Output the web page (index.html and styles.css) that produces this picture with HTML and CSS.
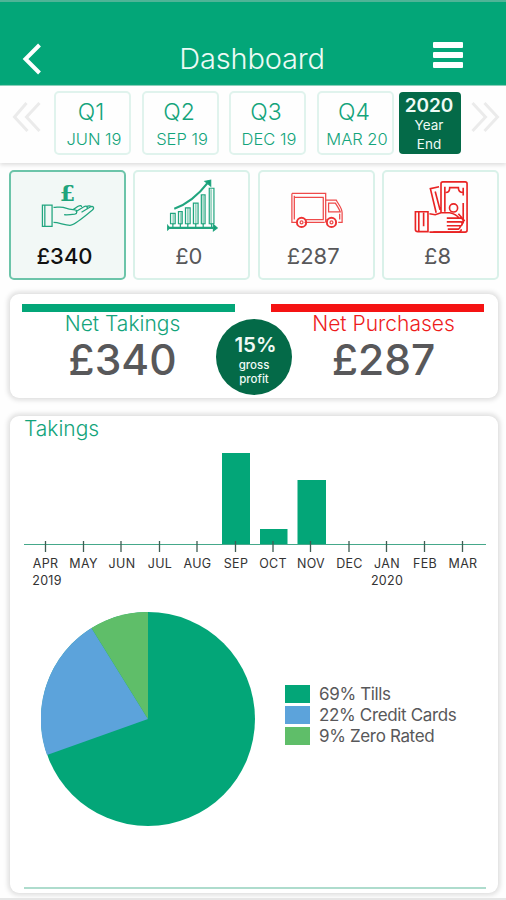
FILE: index.html
```html
<!DOCTYPE html>
<html lang="en">
<head>
  <meta charset="UTF-8">
  <meta name="viewport" content="width=device-width, initial-scale=1.0">
  <title>Dashboard</title>
  <link rel="stylesheet" href="styles.css">
</head>
<body>
  <header class="topbar">
    <svg class="back" width="20" height="34" viewBox="0 0 20 34"><path d="M17.500 3L3.500 17l14 14"/></svg>
    <h1>Dashboard</h1>
    <div class="menu"><span></span><span></span><span></span></div>
  </header>

  <nav class="periods">
    <svg class="arrow" width="30" height="32" viewBox="0 0 30 32"><path d="M15.500 2L3.500 16l13 14M28.500 2L15.500 16l13 14"/></svg>
    <div class="quarter q1"><b>Q1</b><span>JUN 19</span></div>
    <div class="quarter q2"><b>Q2</b><span>SEP 19</span></div>
    <div class="quarter q3"><b>Q3</b><span>DEC 19</span></div>
    <div class="quarter q4"><b>Q4</b><span>MAR 20</span></div>
    <div class="year"><b>2020</b><span>Year<br>End</span></div>
    <svg class="arrow arrow-next" width="30" height="32" viewBox="0 0 30 32"><path d="M2.500 2l13 14-13 14M14.500 2l13 14-13 14"/></svg>
  </nav>

  <section class="tiles">
    <div class="tile active">
      <svg class="icon green" width="58" height="56" viewBox="0 0 60 58">
        <text class="pound" x="29.500" y="24">£</text>
        <path d="M3.500 28h10v22h-10zM6 28v22"/>
        <path d="M15 30.500c4 0 6-1 10 0 4 1.500 8 2.500 12 2.500 3 0 3 4 0 4.500-4 .5-8 1-11 .5M15 46c6 0 11 3 17 3 5 0 17-11 23-15.500 3-2.500 1-5-2-3.500l-9 5.500M38 35l8-5c3-1.500 5-.5 3.500 1.500M35 33l5-3.500c3-1.500 4-1 4 .5M49 30c2-1.500 5-1.500 5 .5"/>
      </svg>
      <span>£340</span>
    </div>
    <div class="tile">
      <svg class="icon green" width="58" height="56" viewBox="0 0 62 60">
        <path d="M11 38V50M19 37V50M26.500 32V50M35 27V50M43 19V50M51.500 12V50" class="bar-shadow"/>
        <path d="M8 38h5v11H8zM16.500 36h4v13h-4zM24 32h5v17h-5zM32.500 27h5v22h-5zM41 18h4v31h-4zM49.500 11h5v38h-5z"/>
        <path class="thick" d="M5 53.500h50M12 33c14-5 26-15 36-28"/>
        <path class="solid" d="M45 3.500l6-1 0 6zM54 50l4 3.500-4 3zM5 51l2 2.500-2 2z"/>
        <path d="M10.500 49v4M18.500 49v4M26.500 49v4M35 49v4M43 49v4M52 49v4"/>
      </svg>
      <span>£0</span>
    </div>
    <div class="tile">
      <svg class="icon red" width="58" height="56" viewBox="0 0 60 58">
        <path d="M4 16h35v30M4 16v30h5M17 46h21M6.500 43V18.500M6.500 20H37M17 43h20M36.500 20v23"/>
        <path d="M39 23h11c2 4 6 8 6 13v10h-4M42 26h7c2 3 4 6 5 9H42zM39 43h1M53.500 37v6"/>
        <circle class="wheel" cx="14" cy="46" r="4.800"/><circle cx="14" cy="46" r="1.500"/>
        <circle class="wheel" cx="45" cy="46" r="4.800"/><circle cx="45" cy="46" r="1.500"/>
      </svg>
      <span>£287</span>
    </div>
    <div class="tile">
      <svg class="icon red" width="58" height="56" viewBox="0 0 60 58">
        <path class="mid" d="M30 36V6q0-2 2-2h23q2 0 2 2v48q0 2-2 2H22M34 9v26M53 18V10M53 47V26M35 15c3 0 4-2 4-5h9c0 3 2 5 5 5M28 9l-9 2 6 25M24 14l5 19"/>
        <circle class="mid" cx="43" cy="31" r="4.200"/>
        <path class="mid" d="M3.500 35h13v20.500H6q-2.500 0-2.500-2zM7 35v20M12 36v14M18 37l6 1 6-2h9c5 1 8 3 10 6M18 56h29c3 0 4-1 4-3M36 41.500h14q2 0 3 2M36 45.500h15q2 2 0 4H36M37 53h11q2-1 2-3M48 37l6 7-3 3"/>
      </svg>
      <span>£8</span>
    </div>
  </section>

  <section class="card summary">
    <div class="total takings">
      <h2>Net Takings</h2>
      <p>£340</p>
    </div>
    <div class="total purchases">
      <h2>Net Purchases</h2>
      <p>£287</p>
    </div>
    <div class="profit"><b>15%</b><span>gross<br>profit</span></div>
  </section>

  <section class="card report">
    <h2>Takings</h2>
    <svg class="chart" width="462" height="146" viewBox="24 444 462 146">
      <path class="bar" d="M222 453h28v91h-28zM260 529h27.500v15H260zM297.500 480H326v64h-28.500z"/>
      <path class="axis" d="M24 544.500h462"/>
      <path class="ticks" d="M45.500 541v11M83.500 541v11M121 541v11M159.500 541v11M197 541v11M235.500 541v11M273 541v11M310.500 541v11M349 541v11M386.500 541v11M424.500 541v11M462.500 541v11"/>
      <g class="labels">
        <text x="45.500" y="568">APR</text>
        <text x="83.500" y="568">MAY</text>
        <text x="122" y="568">JUN</text>
        <text x="160" y="568">JUL</text>
        <text x="197.500" y="568">AUG</text>
        <text x="236" y="568">SEP</text>
        <text x="273" y="568">OCT</text>
        <text x="311" y="568">NOV</text>
        <text x="349.500" y="568">DEC</text>
        <text x="387" y="568">JAN</text>
        <text x="425" y="568">FEB</text>
        <text x="463" y="568">MAR</text>
        <text x="47" y="585">2019</text>
        <text x="387" y="585">2020</text>
      </g>
    </svg>
    <div class="split">
      <svg class="pie" width="214" height="214" viewBox="-107 -107 214 214">
        <circle r="107" fill="#03a678"/>
        <path fill="#5ca3db" d="M0 0L-101 36A107 107 0 0 1 -56.500 -91Z"/>
        <path fill="#5fbe69" d="M0 0L-56.500 -91A107 107 0 0 1 0 -107Z"/>
      </svg>
      <ul class="legend">
        <li class="tills">69% Tills</li>
        <li class="cards">22% Credit Cards</li>
        <li class="zero">9% Zero Rated</li>
      </ul>
    </div>
  </section>
</body>
</html>
```
FILE: styles.css
```css
* {
  box-sizing: border-box;
}
body {
  margin: 0;
  height: 900px;
  overflow: hidden;
  background: #fefefe;
  border-bottom: 2px solid #e6e6e6;
  font-family: Inter, "Liberation Sans", sans-serif;
  color: #58585a;
}
h1, h2, p, ul {
  margin: 0;
  padding: 0;
  font-weight: 300;
}
svg {
  display: block;
  fill: none;
}

/* header */
.topbar {
  height: 86px;
  padding: 32px 43px 0 22px;
  display: flex;
  justify-content: space-between;
  background: #03a678;
  border-top: 2px solid #4fb497;
  border-bottom: 1px solid #7fcdb5;
}
.topbar h1 {
  margin-left: 29px;
  color: #ecfaf5;
  font-size: 29px;
  line-height: 50px;
  letter-spacing: -0.2px;
}
.back {
  margin-top: 8px;
  stroke: #fff;
  stroke-width: 4;
}
.menu {
  padding-top: 8px;
}
.menu span {
  display: block;
  width: 30px;
  height: 6px;
  margin-bottom: 4px;
  background: #fff;
  border-radius: 1px;
}

/* period picker */
.periods {
  height: 77px;
  padding: 5px 6px 0 11px;
  display: flex;
  box-shadow: 0 2px 4px #dedede;
  color: #13a47b;
  text-align: center;
}
.arrow {
  margin-top: 10px;
  stroke: #ebebeb;
  stroke-width: 3;
}
.arrow-next {
  margin-left: 9px;
}
.quarter {
  width: 77px;
  height: 64px;
  margin-left: 11px;
  border: 2px solid #e0f3ed;
  border-radius: 5px;
}
.quarter.q1 {
  margin-left: 13px;
}
.quarter.q3 {
  margin-left: 10px;
}
.quarter b, .quarter span, .year b, .year span {
  display: block;
}
.quarter b {
  font-size: 23px;
  font-weight: 350;
  line-height: 28px;
  padding: 5px 3px 0 0;
}
.quarter span {
  font-size: 16.500px;
  line-height: 26px;
  font-weight: 350;
  white-space: nowrap;
  margin: 0 -4px;
  padding-left: 3px;
}
.year {
  width: 62px;
  height: 62px;
  margin: 1px 0 0 5px;
  border-radius: 4px;
  background: #046a48;
  color: #effaf5;
}
.year b {
  font-size: 19px;
  font-weight: 600;
  line-height: 28px;
  padding-right: 2px;
}
.year span {
  font-size: 13.500px;
  line-height: 18.500px;
  margin-top: -4px;
  padding-right: 2px;
}

/* tiles */
.tiles {
  display: flex;
  justify-content: space-between;
  padding: 7px 7px 0 9px;
}
.tile {
  width: 117px;
  height: 110px;
  padding-top: 6px;
  border: 2px solid #d9f1e9;
  border-radius: 5px;
  font-size: 22px;
  line-height: 30px;
  text-align: center;
}
.tile.active {
  border-color: #6cc4a9;
  background: #f2f8f6;
  color: #111;
}
.tile.active span {
  font-weight: 500;
}
.tile span {
  display: block;
  margin-top: 7px;
  padding-right: 6px;
}
.icon {
  margin-left: 28px;
  stroke-width: 1.300;
}
.icon.green {
  stroke: #21a57f;
}
.icon.red {
  stroke: #ee4a4a;
}
.icon .mid {
  stroke: #e92424;
  stroke-width: 1.700;
}
.icon .wheel {
  stroke-width: 2;
  stroke: #e33;
}
.icon .thick {
  stroke-width: 2.300;
}
.icon .bar-shadow {
  stroke: #9bd4c2;
  stroke-width: 2;
}
.icon .solid {
  fill: #139c74;
}
.pound {
  font: bold 23px "DejaVu Serif", serif;
  fill: #1fa47c;
  stroke: none;
  text-anchor: middle;
}

/* cards */
.card {
  margin: 0 8px 0 10px;
  background: #fff;
  border-radius: 9px;
  box-shadow: 0 0 5px 2px #dcdcdc;
}
.summary {
  position: relative;
  height: 104px;
  margin-top: 14px;
  padding: 10px 14px 0 12px;
  display: flex;
  justify-content: space-between;
  text-align: center;
}
.total {
  width: 213px;
  border-top: 8px solid #03a678;
}
.total h2 {
  font-size: 21px;
  line-height: 24px;
  color: #13a47b;
  padding-right: 12px;
}
.total p {
  font-size: 42.500px;
  line-height: 48px;
  font-weight: 500;
  padding-right: 12px;
}
.purchases {
  border-top-color: #f51313;
}
.purchases h2 {
  color: #ee1c1c;
  padding-left: 24px;
}
.purchases p {
  padding-left: 24px;
}
.profit {
  position: absolute;
  left: 206px;
  top: 25px;
  width: 76px;
  height: 76px;
  padding-top: 13px;
  border-radius: 50%;
  background: #046a48;
  color: #effaf5;
}
.profit b, .profit span {
  display: block;
}
.profit b {
  font-size: 20.500px;
  font-weight: 600;
  line-height: 26px;
  padding-left: 3px;
}
.profit span {
  font-size: 11.500px;
  font-weight: 500;
  line-height: 14px;
}

.report {
  height: 477px;
  margin-top: 18px;
  padding: 0 12px 0 14px;
}
.report h2 {
  font-size: 21px;
  line-height: 26px;
  padding-bottom: 2px;
  color: #13a47b;
}
.bar {
  fill: #03a678;
}
.axis {
  stroke: #45a88a;
}
.ticks {
  stroke: #3f5d53;
  stroke-width: 1.300;
}
.labels {
  fill: #333;
  font-size: 12.500px;
  letter-spacing: 0.3px;
  text-anchor: middle;
}
.split {
  height: 299px;
  padding: 22px 0 0 17px;
  display: flex;
  border-bottom: 2px solid #aedccd;
}
.legend {
  list-style: none;
  margin: 71px 0 0 30px;
}
.legend li {
  display: flex;
  align-items: center;
  height: 21px;
  font-size: 17px;
  font-weight: 400;
  letter-spacing: -0.35px;
  white-space: nowrap;
}
.legend li::before {
  content: "";
  width: 25px;
  height: 18px;
  margin-right: 9px;
  background: #03a678;
}
.legend .cards::before {
  background: #5ca3db;
}
.legend .zero::before {
  background: #5fbe69;
}
```
